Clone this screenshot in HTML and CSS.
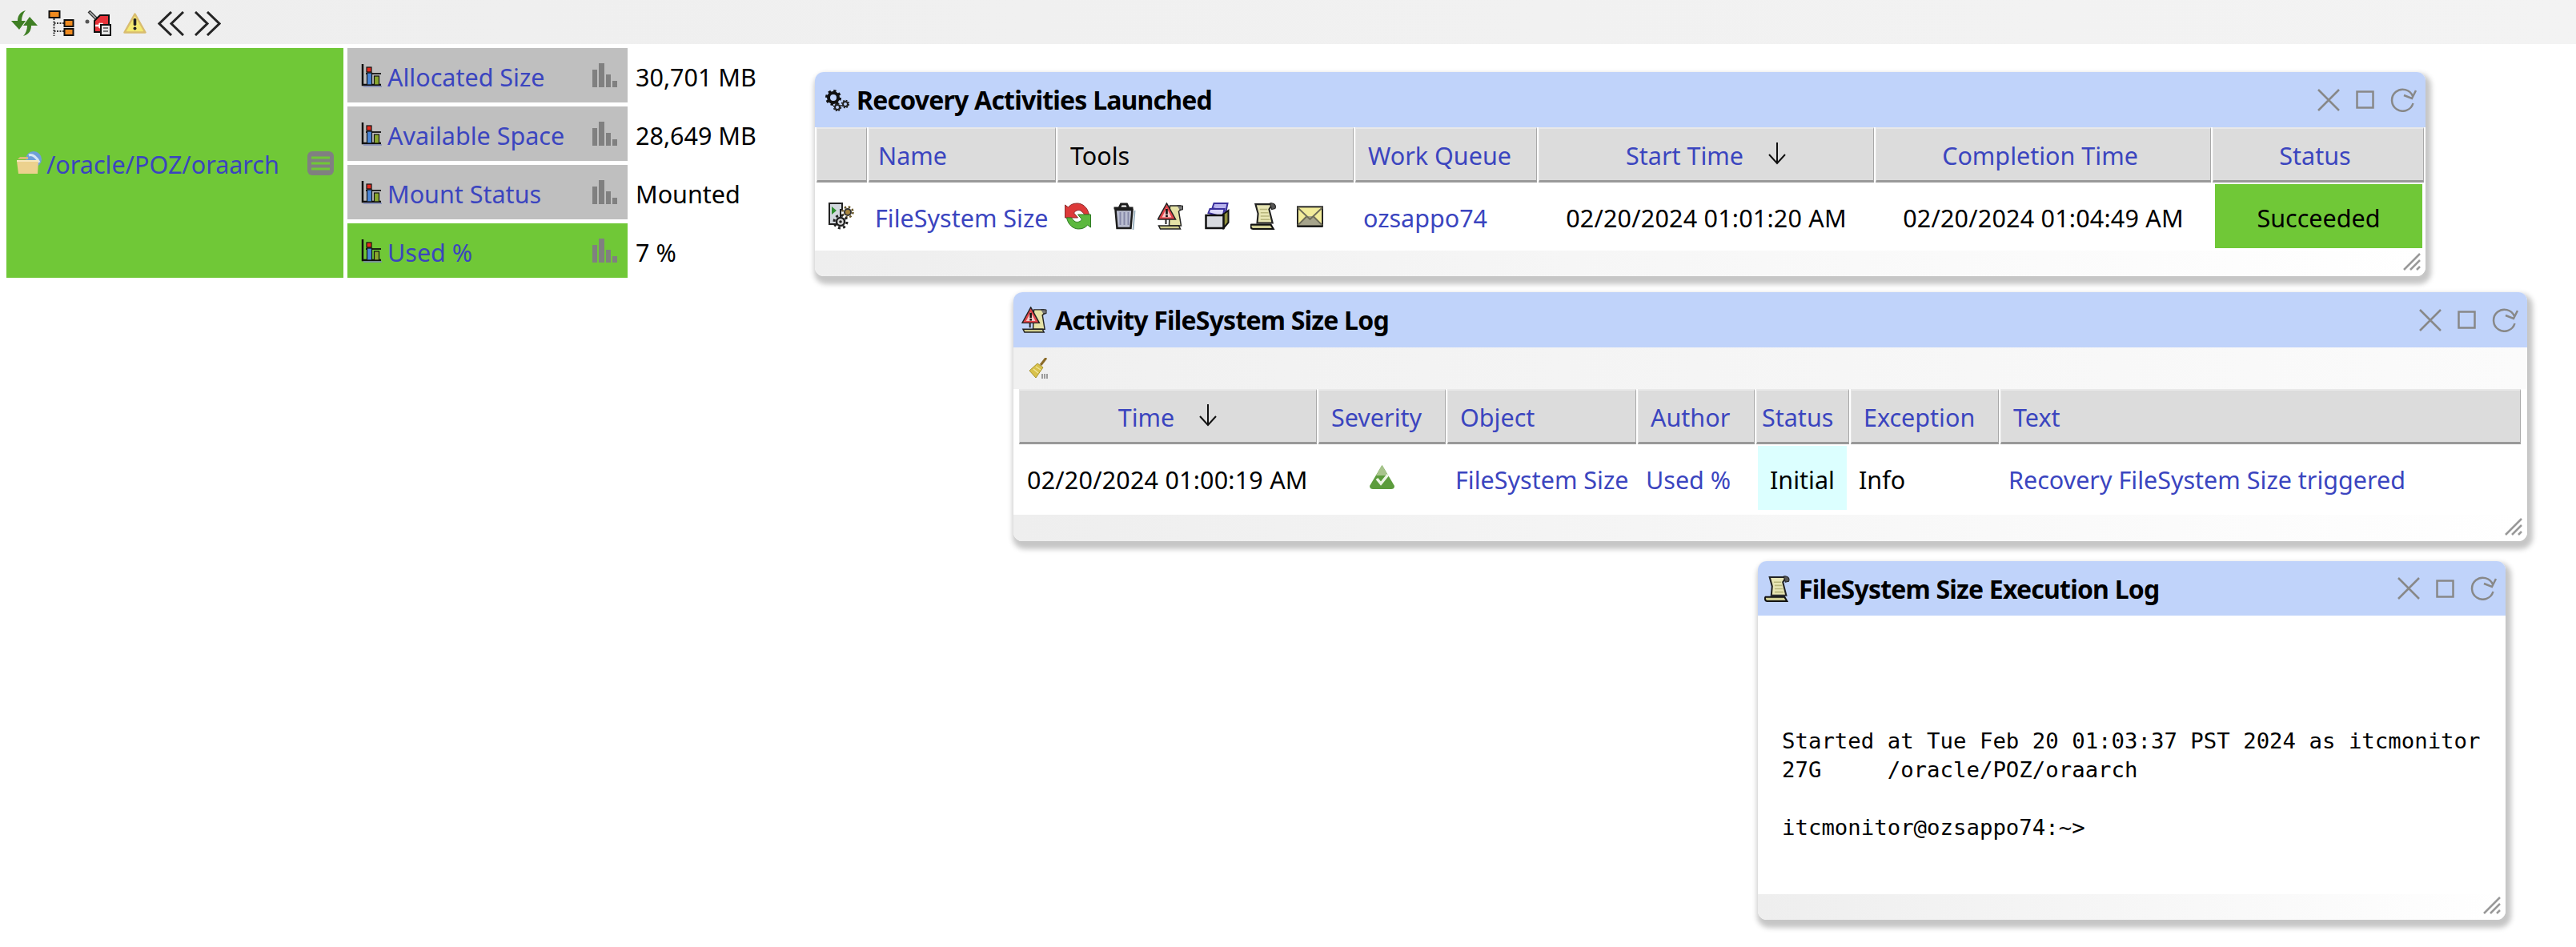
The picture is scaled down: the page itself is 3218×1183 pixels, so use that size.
FILE: index.html
```html
<!DOCTYPE html>
<html lang="en">
<head>
<meta charset="utf-8">
<title>FileSystem recovery</title>
<link rel="stylesheet" href="styles.css">
</head>
<body>
<svg class="sprite" aria-hidden="true">
  <defs>
    <symbol id="chart" viewBox="0 0 26 30">
      <path d="M2 1V27H25" fill="none" stroke="#111" stroke-width="2.500"/>
      <path d="M6 13H25" fill="none" stroke="#111" stroke-width="1.800"/>
      <rect x="7" y="5" width="6" height="6" fill="#e62b1e" stroke="#111" stroke-width="1.200"/>
      <rect x="7.500" y="12" width="6" height="15" fill="#4a86d8" stroke="#111" stroke-width="1.200"/>
      <rect x="16.500" y="16" width="6" height="11" fill="#8aa82e" stroke="#111" stroke-width="1.200"/>
      <path d="M3 29H26" stroke="#7f88b8" stroke-width="1.500"/>
    </symbol>
    <symbol id="bars" viewBox="0 0 31 30">
      <rect x="0" y="8" width="6" height="22" fill="#808080"/>
      <rect x="8" y="0" width="7" height="30" fill="#808080"/>
      <rect x="17" y="14" width="6" height="16" fill="#808080"/>
      <rect x="25" y="22" width="6" height="8" fill="#808080"/>
    </symbol>
    <symbol id="close" viewBox="0 0 28 28">
      <path d="M1 1L27 27M27 1L1 27" stroke="#888" stroke-width="2.500" fill="none"/>
    </symbol>
    <symbol id="maxi" viewBox="0 0 23 23">
      <rect x="1.500" y="1.500" width="20" height="20" stroke="#888" stroke-width="2.500" fill="none"/>
    </symbol>
    <symbol id="reload" viewBox="0 0 34 30">
      <path d="M29 10A13.500 13.500 0 1 0 29.500 19" stroke="#888" stroke-width="2.500" fill="none"/>
      <path d="M18 9L28 13L33 3" stroke="#888" stroke-width="2.500" fill="none"/>
    </symbol>
    <symbol id="grip" viewBox="0 0 22 22">
      <path d="M1 21L21 1M9 21L21 9M17 21L21 17" stroke="#999" stroke-width="2.500" fill="none"/>
    </symbol>
    <symbol id="sort-arrow" viewBox="0 0 24 28">
      <path d="M12 0V26M2 15L12 26L22 15" fill="none" stroke="#111" stroke-width="2"/>
    </symbol>
    <symbol id="alert-scroll" viewBox="0 0 32 34">
      <path d="M15 4H28L30 8L26 11L29 29H14Z" fill="#e5e2a6" stroke="#222" stroke-width="1.500"/>
      <path d="M24 4L31 4V9H27" fill="#777" stroke="#222"/>
      <path d="M11 1L22 21H0Z" fill="#e2454a" stroke="#222" stroke-width="1.500"/>
      <path d="M11 7L17 18.500H5Z" fill="#f7c6c6"/>
      <rect x="9.700" y="8" width="2.600" height="6.500" fill="#111"/>
      <rect x="9.700" y="15.500" width="2.600" height="2.600" fill="#111"/>
      <path d="M10 21V27" stroke="#222" stroke-width="2"/>
      <path d="M1 29H26L28 33H3Z" fill="#cfcc8c" stroke="#222" stroke-width="1.500"/>
    </symbol>
    <symbol id="scroll" viewBox="0 0 31 32">
      <path d="M6 2H26L22 8L26 24H8L9 13Z" fill="#e8e6b4" stroke="#222" stroke-width="2"/>
      <path d="M23 1C27 0 31 3 29 7L25 8Z" fill="#555" stroke="#222"/>
      <path d="M11 8H20M12 12H21M12 16H22M12 20H23" stroke="#b8b67c" stroke-width="1.500"/>
      <path d="M1 26H24L27 31H3C0 31 0 27 1 26Z" fill="#cfcd94" stroke="#111" stroke-width="2"/>
    </symbol>
  </defs>
</svg>

<nav class="toolbar">
  <svg class="tb-icon" viewBox="0 0 33 32" aria-hidden="true">
    <path d="M18 0C10 2 8 8 8 13H0L10 24L18 13H13C13 8 15 3 18 0Z" fill="#3f7f24"/>
    <path d="M15 32C23 30 25 24 25 19H33L23 8L15 19H20C20 24 18 29 15 32Z" fill="#3f7f24"/>
  </svg>
  <svg class="tb-icon" viewBox="0 0 32 32" aria-hidden="true">
    <rect x="1" y="1" width="13" height="8" fill="#ee8a1f" stroke="#111" stroke-width="2"/>
    <path d="M7 10V32M7 16H20M7 26H20" stroke="#333" stroke-width="2" stroke-dasharray="2 1.500" fill="none"/>
    <rect x="20" y="12" width="11" height="8" fill="#ee8a1f" stroke="#111" stroke-width="2"/>
    <rect x="20" y="23" width="11" height="8" fill="#ee8a1f" stroke="#111" stroke-width="2"/>
  </svg>
  <svg class="tb-icon" viewBox="0 0 33 32" aria-hidden="true">
    <path d="M5 1L16 12" stroke="#333" stroke-width="4"/>
    <path d="M6 2L15 11" stroke="#bbb" stroke-width="1.500"/>
    <circle cx="3" cy="14" r="2.500" fill="#555"/>
    <path d="M12 27V13L19 6H30V27Z" fill="#e8333a" stroke="#111" stroke-width="2"/>
    <path d="M13 19H24M18 16L22 22M22 16L18 22" stroke="#fff" stroke-width="2.500"/>
    <rect x="20" y="18" width="12" height="13" fill="#e6e6e6" stroke="#111" stroke-width="2"/>
    <path d="M23 22H29M23 26H29" stroke="#555" stroke-width="1.500"/>
  </svg>
  <svg class="tb-icon tb-warn" viewBox="0 0 29 26" aria-hidden="true">
    <path d="M14.500 1.500L27.500 24.500H1.500Z" fill="#f4ea72" stroke="#d9bd6f" stroke-width="2.500" stroke-linejoin="round"/>
    <rect x="12.700" y="7" width="3.600" height="9" rx="1.500" fill="#222"/>
    <circle cx="14.500" cy="19.500" r="2" fill="#222"/>
  </svg>
  <svg class="tb-chev" viewBox="0 0 33 31" aria-hidden="true">
    <path d="M17 1L2 15.500L17 30M32 1L17 15.500L32 30" fill="none" stroke="#252525" stroke-width="3"/>
  </svg>
  <svg class="tb-chev" viewBox="0 0 33 31" aria-hidden="true">
    <path d="M1 1L16 15.500L1 30M16 1L31 15.500L16 30" fill="none" stroke="#252525" stroke-width="3"/>
  </svg>
</nav>

<main class="tiles">
  <section class="fs-tile">
    <svg class="folder" viewBox="0 0 32 29" aria-hidden="true">
      <circle cx="21" cy="10" r="10" fill="#6f9fd8"/>
      <path d="M15 5C20 3 25 8 28 14" stroke="#d7e6f5" stroke-width="3" fill="none"/>
      <path d="M1 10H14V7H4L1 10Z" fill="#d8bd78"/>
      <path d="M0 12H27L26 28H2Z" fill="#ecd18e"/>
      <path d="M0 12H27" stroke="#f7e8bd" stroke-width="2"/>
    </svg>
    <a class="link fs-name">/oracle/POZ/oraarch</a>
    <svg class="menu" viewBox="0 0 33 30" aria-hidden="true">
      <rect width="33" height="30" rx="6" fill="#808080"/>
      <path d="M5 8H28M5 15H28M5 22H28" stroke="#70c837" stroke-width="3"/>
    </svg>
  </section>
  <div class="metric">
    <div class="metric-label"><svg class="chart"><use href="#chart"/></svg><a class="link">Allocated Size</a><svg class="bars"><use href="#bars"/></svg></div>
    <div class="metric-value">30,701 MB</div>
  </div>
  <div class="metric">
    <div class="metric-label"><svg class="chart"><use href="#chart"/></svg><a class="link">Available Space</a><svg class="bars"><use href="#bars"/></svg></div>
    <div class="metric-value">28,649 MB</div>
  </div>
  <div class="metric">
    <div class="metric-label"><svg class="chart"><use href="#chart"/></svg><a class="link">Mount Status</a><svg class="bars"><use href="#bars"/></svg></div>
    <div class="metric-value">Mounted</div>
  </div>
  <div class="metric">
    <div class="metric-label ok"><svg class="chart"><use href="#chart"/></svg><a class="link">Used %</a><svg class="bars"><use href="#bars"/></svg></div>
    <div class="metric-value">7 %</div>
  </div>
</main>

<section class="window win-activities">
  <header class="win-head">
    <svg class="title-gears" viewBox="0 0 30 27" aria-hidden="true">
      <circle cx="10" cy="10" r="6" fill="none" stroke="#111" stroke-width="4"/>
      <circle cx="10" cy="10" r="8.500" fill="none" stroke="#111" stroke-width="3" stroke-dasharray="3.300 3.370"/>
      <circle cx="15" cy="22" r="3" fill="none" stroke="#222" stroke-width="2"/>
      <circle cx="15" cy="22" r="4.500" fill="none" stroke="#222" stroke-width="1.500" stroke-dasharray="2 1.530"/>
      <circle cx="25" cy="18" r="3" fill="none" stroke="#222" stroke-width="2"/>
      <circle cx="25" cy="18" r="4.500" fill="none" stroke="#222" stroke-width="1.500" stroke-dasharray="2 1.530"/>
    </svg>
    <h2 class="win-title">Recovery Activities Launched</h2>
    <div class="win-controls">
      <svg class="ctl-close"><use href="#close"/></svg>
      <svg class="ctl-max"><use href="#maxi"/></svg>
      <svg class="ctl-reload"><use href="#reload"/></svg>
    </div>
  </header>
  <div class="grid grid-activities">
    <div class="th"></div>
    <div class="th th-name"><a class="link">Name</a></div>
    <div class="th">Tools</div>
    <div class="th"><a class="link">Work Queue</a></div>
    <div class="th th-center"><a class="link">Start Time</a><svg class="sort"><use href="#sort-arrow"/></svg></div>
    <div class="th th-center th-offset"><a class="link">Completion Time</a></div>
    <div class="th th-center th-offset"><a class="link">Status</a></div>

    <div class="td td-icon">
      <svg class="row-icon" viewBox="0 0 32 34" aria-hidden="true">
        <path d="M1 1H17V9H15V27H1Z" fill="#d3d8df" stroke="#222" stroke-width="2"/>
        <path d="M4 5L10 10L4 15Z" fill="#2f8f2f"/>
        <circle cx="24" cy="12" r="4" fill="#a8863e" stroke="#333" stroke-width="2"/>
        <circle cx="24" cy="12" r="6.500" fill="none" stroke="#6b5a2c" stroke-width="2.500" stroke-dasharray="2.500 2.600"/>
        <circle cx="15" cy="24" r="5" fill="#ddd" stroke="#222" stroke-width="2.500"/>
        <circle cx="15" cy="24" r="8" fill="none" stroke="#222" stroke-width="3" stroke-dasharray="3 3.280"/>
        <circle cx="15" cy="24" r="1.800" fill="#222"/>
      </svg>
    </div>
    <div class="td td-first"><a class="link">FileSystem Size</a></div>
    <div class="td tools">
      <svg class="tool" viewBox="0 0 32 34" aria-hidden="true">
        <path d="M30 15C28 6 22 1 15 1C10 1 6 3 4 6L0 3V19H16L11 13C13 10 16 9 19 10C21 11 23 13 24 15Z" fill="#dd3a3a" stroke="#8a2b2b"/>
        <path d="M2 19C4 28 10 33 17 33C22 33 26 31 28 28L32 31V15H16L21 21C19 24 16 25 13 24C11 23 9 21 8 19Z" fill="#5cb83e" stroke="#2f7a25"/>
      </svg>
      <svg class="tool" viewBox="0 0 30 34" aria-hidden="true">
        <path d="M2 7H26M9 6L11 2H18L20 6" fill="none" stroke="#1c1c1c" stroke-width="3"/>
        <path d="M4 9H25L23 32H6Z" fill="#b9bdd0" stroke="#1c1c1c" stroke-width="2.500"/>
        <path d="M10 12V28M15 12V28M20 12V28" stroke="#8588a8" stroke-width="2"/>
        <path d="M28 10L26 34" stroke="#9fb4c2" stroke-width="2"/>
      </svg>
      <svg class="tool"><use href="#alert-scroll"/></svg>
      <svg class="tool" viewBox="0 0 30 34" aria-hidden="true">
        <path d="M9 7L11 1H28L26 11Z" fill="#b9b4ee" stroke="#3a2f9c" stroke-width="2"/>
        <path d="M4 13L6 8H24L22 18Z" fill="#dcd9fa" stroke="#3a2f9c" stroke-width="2"/>
        <path d="M22 15L29 10V25L23 32Z" fill="#8f8f3c" stroke="#111" stroke-width="2"/>
        <rect x="1" y="16" width="22" height="16" fill="#d8dadf" stroke="#111" stroke-width="2.500"/>
      </svg>
      <svg class="tool"><use href="#scroll"/></svg>
      <svg class="tool" viewBox="0 0 34 28" aria-hidden="true">
        <rect x="1" y="2" width="32" height="25" fill="#f2ec9a" stroke="#222" stroke-width="2"/>
        <path d="M1 27L13 14L21 14L33 27Z" fill="#a6a48c"/>
        <path d="M1 3L17 18L33 3M1 26L13 14M33 26L21 14" fill="none" stroke="#6f6d58" stroke-width="2"/>
        <path d="M1 27H33" stroke="#111" stroke-width="2.500"/>
      </svg>
    </div>
    <div class="td"><a class="link">ozsappo74</a></div>
    <div class="td td-center date">02/20/2024 01:01:20 AM</div>
    <div class="td td-center date">02/20/2024 01:04:49 AM</div>
    <div class="td td-center status-ok">Succeeded</div>
  </div>
  <footer class="win-foot"><svg class="grip"><use href="#grip"/></svg></footer>
</section>

<section class="window win-log">
  <header class="win-head">
    <svg class="title-icon"><use href="#alert-scroll"/></svg>
    <h2 class="win-title">Activity FileSystem Size Log</h2>
    <div class="win-controls">
      <svg class="ctl-close"><use href="#close"/></svg>
      <svg class="ctl-max"><use href="#maxi"/></svg>
      <svg class="ctl-reload"><use href="#reload"/></svg>
    </div>
  </header>
  <div class="win-tools">
    <svg class="broom" viewBox="0 0 24 27" aria-hidden="true">
      <path d="M22 0L15 9" stroke="#8a6a28" stroke-width="3"/>
      <path d="M11 7L18 12L9 25L1 16Z" fill="#d8c14a" stroke="#a89430" stroke-width="1"/>
      <path d="M6 14L12 19M9 11L15 15" stroke="#f0e498" stroke-width="1.500"/>
      <path d="M17 20V26M20 20V26M23 20V26" stroke="#666" stroke-width="1.200"/>
    </svg>
  </div>
  <div class="grid grid-log">
    <div class="th th-center"><a class="link">Time</a><svg class="sort"><use href="#sort-arrow"/></svg></div>
    <div class="th"><a class="link">Severity</a></div>
    <div class="th"><a class="link">Object</a></div>
    <div class="th"><a class="link">Author</a></div>
    <div class="th th-tight"><a class="link">Status</a></div>
    <div class="th"><a class="link">Exception</a></div>
    <div class="th"><a class="link">Text</a></div>

    <div class="td date">02/20/2024 01:00:19 AM</div>
    <div class="td td-center">
      <svg class="severity" viewBox="0 0 33 32" aria-hidden="true">
        <path d="M16.500 1L32 27C32 30 30 31 28 31H5C3 31 1 30 1 27Z" fill="#5c9c3c"/>
        <path d="M16.500 1L24 14H9Z" fill="#a8c48c"/>
        <path d="M10 18L15 24L24 13" stroke="#eef5e6" stroke-width="3.500" fill="none"/>
      </svg>
    </div>
    <div class="td"><a class="link">FileSystem Size</a></div>
    <div class="td"><a class="link">Used %</a></div>
    <div class="td td-center status-init">Initial</div>
    <div class="td">Info</div>
    <div class="td"><a class="link">Recovery FileSystem Size triggered</a></div>
  </div>
  <footer class="win-foot"><svg class="grip"><use href="#grip"/></svg></footer>
</section>

<section class="window win-exec">
  <header class="win-head">
    <svg class="title-icon"><use href="#scroll"/></svg>
    <h2 class="win-title">FileSystem Size Execution Log</h2>
    <div class="win-controls">
      <svg class="ctl-close"><use href="#close"/></svg>
      <svg class="ctl-max"><use href="#maxi"/></svg>
      <svg class="ctl-reload"><use href="#reload"/></svg>
    </div>
  </header>
  <pre class="console">Started at Tue Feb 20 01:03:37 PST 2024 as itcmonitor
27G     /oracle/POZ/oraarch

itcmonitor@ozsappo74:~&gt;</pre>
  <footer class="win-foot"><svg class="grip"><use href="#grip"/></svg></footer>
</section>
</body>
</html>
```
FILE: styles.css
```css
* { box-sizing: border-box; }

html, body {
  margin: 0;
  height: 1183px;
  overflow: hidden;
  background: #fff;
}

body {
  position: relative;
  font-family: "Noto Sans", "Open Sans", sans-serif;
  font-size: 30.5px;
  color: #000;
}

.sprite { position: absolute; width: 0; height: 0; }

.link { color: #3b45bf; }

/* top toolbar */
.toolbar {
  display: flex;
  align-items: center;
  height: 55px;
  padding: 3px 0 0 14px;
  background: linear-gradient(90deg, #eeeeee, #f3f3f3);
}
.tb-icon { width: 33px; height: 32px; margin-right: 13px; flex: none; }
.tb-warn { width: 29px; height: 26px; margin-left: 2px; margin-right: 14px; }
.tb-chev { width: 33px; height: 31px; margin-right: 13px; flex: none; }

/* tiles */
.tiles {
  display: grid;
  grid-template-columns: 421px 440px;
  grid-template-rows: repeat(4, 68px);
  gap: 5px;
  margin: 5px 0 0 8px;
}
.fs-tile {
  grid-row: 1 / span 4;
  display: flex;
  align-items: center;
  padding: 0 12px 0 13px;
  background: #70c837;
}
.folder { width: 32px; height: 29px; flex: none; margin-right: 5px; }
.fs-name { flex: 1; padding-top: 3px; }
.menu { width: 33px; height: 30px; flex: none; }

.metric { display: flex; align-items: center; }
.metric-label {
  display: flex;
  align-items: center;
  width: 350px;
  height: 68px;
  padding: 3px 13px 0 17px;
  background: #bfbfbf;
  flex: none;
}
.metric-label.ok { background: #70c837; }
.chart { width: 26px; height: 30px; flex: none; margin: -3px 7px 0 0; }
.metric-label .link { flex: 1; }
.bars { width: 31px; height: 30px; flex: none; margin-top: -3px; }
.metric-value { padding: 3px 0 0 10px; white-space: nowrap; }

/* windows */
.window {
  position: absolute;
  display: flex;
  flex-direction: column;
  background: #fff;
  border-radius: 11px;
  box-shadow: 3px 6px 6px 4px #c6c6c6;
  overflow: hidden;
}
.win-activities { left: 1018px; top: 90px; width: 2012px; }
.win-log { left: 1266px; top: 365px; width: 1891px; }
.win-exec { left: 2196px; top: 701px; width: 934px; }

.win-head {
  display: flex;
  align-items: center;
  height: 69px;
  padding: 0 11px 0 10px;
  background: #c0d3fa;
  flex: none;
}
.win-exec .win-head { height: 68px; padding-left: 8px; }
.win-title {
  margin: 0;
  flex: 1;
  font-size: 32px;
  font-weight: 700;
  letter-spacing: -0.8px;
  white-space: nowrap;
}
.title-gears { width: 30px; height: 27px; margin: 2px 9px 0 3px; flex: none; }
.title-icon { width: 33px; height: 33px; margin-right: 9px; flex: none; }
.win-exec .title-icon { margin-right: 10px; }

.win-controls { display: flex; align-items: center; }
.ctl-close { width: 28px; height: 28px; margin-right: 20px; }
.ctl-max { width: 23px; height: 23px; margin-right: 19px; }
.ctl-reload { width: 34px; height: 30px; }

.win-tools {
  display: flex;
  align-items: center;
  height: 52px;
  padding-left: 19px;
  background: linear-gradient(90deg, #f0f0f0, #fbfbfb);
}
.broom { width: 24px; height: 27px; }

.win-foot {
  display: flex;
  justify-content: flex-end;
  align-items: flex-end;
  flex: none;
  height: 32px;
  margin-top: 3px;
  padding: 0 6px 7px 0;
  background: linear-gradient(90deg, #eeeeee, #ffffff);
}
.grip { width: 22px; height: 22px; }
.win-log .win-foot { height: 33px; margin-top: 6px; }
.win-exec .win-foot { margin-top: 0; }

/* grids */
.grid {
  display: grid;
  grid-template-rows: 69px 80px;
  row-gap: 2px;
  column-gap: 2px;
}
.grid-activities {
  grid-template-columns: 63px 234px 370px 227px 419px 419px 264px;
  padding-left: 2px;
}
.grid-log {
  grid-template-columns: 372px 159px 236px 146px 116px 185px 650px;
  padding-left: 7px;
}
.th {
  display: flex;
  align-items: center;
  padding: 1px 0 0 15px;
  background: #dcdcdc;
  border-top: 2px solid #e8e8e8;
  border-left: 1px solid #e4e4e4;
  border-right: 1px solid #a8a8a8;
  border-bottom: 3px solid #999;
  white-space: nowrap;
}
.th-center { justify-content: center; padding-left: 0; }
.th-offset { padding-right: 8px; }
.th-tight { padding-left: 6px; }
.th-name { padding-left: 11px; }
.sort { width: 24px; height: 28px; margin: -4px 0 0 30px; flex: none; }

.td {
  display: flex;
  align-items: center;
  padding: 3px 0 0 10px;
  white-space: nowrap;
}
.td-center { justify-content: center; padding-left: 0; }
.td-first { padding-left: 8px; }
.td-icon { padding-left: 15px; }
.date { letter-spacing: 0.2px; }
.row-icon { width: 32px; height: 34px; margin-top: -3px; }
.tools { gap: 25px; padding-left: 9px; }
.tool { width: 33px; height: 34px; margin-top: -3px; flex: none; }
.severity { width: 33px; height: 32px; margin-top: -6px; }
.status-ok { background: #70c837; margin: 0 2px 0 3px; }
.status-init { background: #dcffff; margin: 0 3px 0 2px; }

/* console */
.console {
  flex: none;
  height: 348px;
  margin: 0;
  padding: 139px 0 0 30px;
  font-family: "DejaVu Sans Mono", monospace;
  font-size: 27.35px;
  line-height: 36px;
}
```
